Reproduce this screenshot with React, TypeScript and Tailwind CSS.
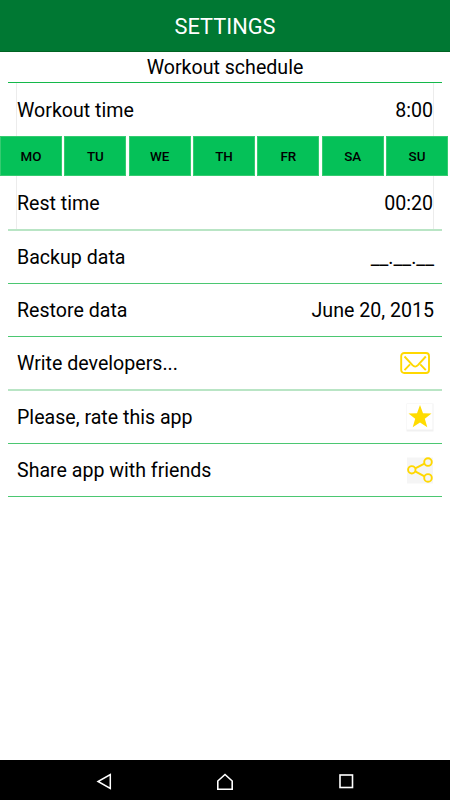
import React from "react";

const DAYS = ["MO", "TU", "WE", "TH", "FR", "SA", "SU"];

function MailIcon() {
  return (
    <svg width="30" height="22" viewBox="0 0 30 22" fill="none" stroke="#ffd800" strokeWidth="1.9" strokeLinejoin="round">
      <rect x="1.2" y="1" width="27.8" height="20" rx="3" />
      <path d="M4.5 4.5 12.5 13.2Q15.2 16 17.9 13.2L25.8 4.5M4.5 18.2 10 12.4M25.8 18.2 20.3 12.4" />
    </svg>
  );
}

function StarIcon() {
  return (
    <svg width="28" height="29" viewBox="0 0 28 29">
      <rect x="0.5" y="0.5" width="27" height="28" fill="#f1f1f1" />
      <rect x="1" y="1" width="25.5" height="25.5" fill="#fff" />
      <path d="M14 2 17 10.3 25.5 10.5 18.8 15.8 21.3 24.3 14 19.4 6.7 24.3 9.2 15.8 2.5 10.5 11 10.3Z" fill="#ffdc00" />
    </svg>
  );
}

function ShareIcon() {
  return (
    <svg width="27" height="27" viewBox="0 0 27 27" fill="none" stroke="#ffd800" strokeWidth="1.9">
      <rect x="0" y="0.5" width="26" height="26" fill="#f5f5f5" stroke="none" />
      <circle cx="4.8" cy="12.8" r="3.7" />
      <circle cx="21" cy="5.1" r="3.8" />
      <circle cx="21" cy="20.9" r="3.8" />
      <path d="M8.2 11.3 17.5 6.7M8.2 14.4 17.5 19.3" />
    </svg>
  );
}

type RowProps = { label: string; size: string; children: React.ReactNode };

function Row({ label, size, children }: RowProps) {
  return (
    <div className={`mx-2 flex items-center justify-between pr-2 pl-[9px] ${size}`}>
      <span className="pt-0.5">{label}</span>
      {children}
    </div>
  );
}

const THIN = "h-[53px] border-b border-[#4bc771]";
const SOFT = "h-[54px] border-b-2 border-[#b9e5c5]";

export default function App() {
  return (
    <div className="flex h-[800px] w-[450px] flex-col overflow-hidden bg-white font-['Roboto',sans-serif] text-[19.6px] leading-6 text-black">
      <header className="flex h-[52px] shrink-0 items-center justify-center border-b border-[#006322] bg-[#007833] pt-[3px] text-[21.8px] text-white">
        SETTINGS
      </header>
      <main className="flex-1">
        <div className="mx-2 flex h-[31px] items-center justify-center border-b border-[#14b84a] pt-px">Workout schedule</div>
        <div className="mr-4 ml-4 flex h-[53px] items-center justify-between border-x border-[#ececec] pt-[3px]">
          <span>Workout time</span>
          <span>8:00</span>
        </div>
        <div className="grid h-10 w-[448px] grid-cols-7 gap-x-[2.3px]">
          {DAYS.map((day) => (
            <button key={day} className="flex items-center justify-center border border-[#35cb70] bg-[#05c158] pt-px text-[13.4px] leading-4 font-medium">
              {day}
            </button>
          ))}
        </div>
        <div className="mx-2 h-[55px] border-b-2 border-[#b9e5c5] px-2">
          <div className="flex h-full items-center justify-between border-x border-[#ececec] pt-[3px]">
            <span>Rest time</span>
            <span>00:20</span>
          </div>
        </div>
        <Row label="Backup data" size={THIN}><span className="pt-0.5">__.__.__</span></Row>
        <Row label="Restore data" size={THIN}><span className="pt-0.5">June 20, 2015</span></Row>
        <Row label="Write developers..." size={SOFT}><span className="mr-1"><MailIcon /></span></Row>
        <Row label="Please, rate this app" size={THIN}><StarIcon /></Row>
        <Row label="Share app with friends" size={THIN}><ShareIcon /></Row>
      </main>
      <nav className="flex h-10 shrink-0 items-center justify-between bg-black pt-[3px] pr-[96px] pl-[96px]">
        <svg width="16" height="18" viewBox="0 0 16 18" fill="none" stroke="#fff" strokeWidth="1.5">
          <path d="M14.3 1.5V15.5L2 8.5Z" />
        </svg>
        <svg width="18" height="18" viewBox="0 0 18 18" fill="none" stroke="#fff" strokeWidth="1.6">
          <path d="M1.8 8 9 1.5 16.2 8V16.3H1.8Z" />
        </svg>
        <svg width="16" height="18" viewBox="0 0 16 18" fill="none" stroke="#fff" strokeWidth="1.6">
          <rect x="2" y="2" width="12.5" height="12.5" />
        </svg>
      </nav>
    </div>
  );
}
